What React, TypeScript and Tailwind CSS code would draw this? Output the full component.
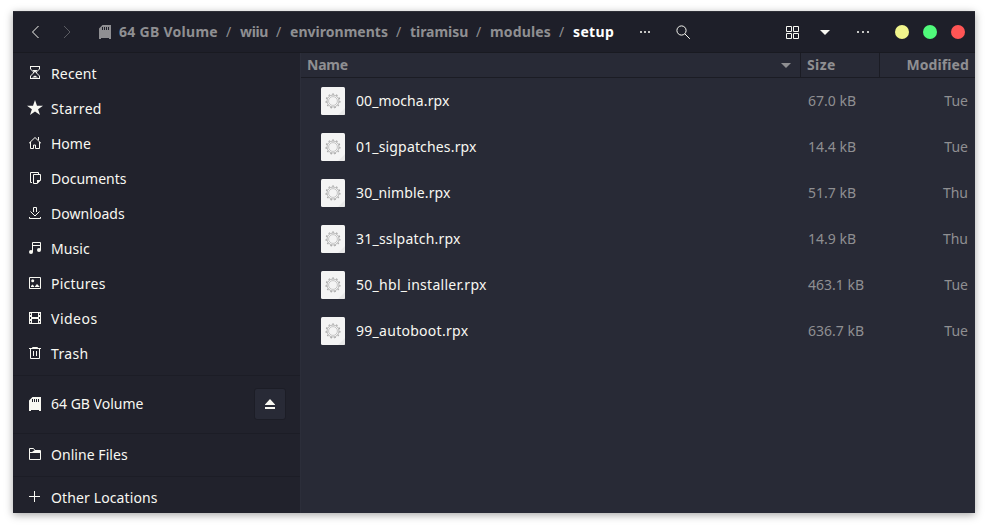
import type { ReactNode } from "react";

function Pix({ d, children, className = "" }: { d?: string; children?: ReactNode; className?: string }) {
  return (
    <svg width="16" height="16" viewBox="0 0 16 16" fill="none" stroke="currentColor" className={"shrink-0 " + className}>
      {d && <path d={d} />}
      {children}
    </svg>
  );
}

const SdCard = ({ className = "" }: { className?: string }) => (
  <Pix className={className}>
    <path
      d="M5.500 1H14v14h-2v-1H4v1H2V4.500zM5 3v3h1V3zM7 3v3h1V3zM9 3v3h1V3zM11 3v3h1V3z"
      fill="currentColor"
      fillRule="evenodd"
      stroke="none"
    />
  </Pix>
);

const icons: Record<string, ReactNode> = {
  recent: (
    <Pix className="mb-px" d="M3 1.500h10M3 13.500h10M3.500 1v3l3 3v1l-3 3v3M12.500 1v3l-3 3v1l3 3v3">
      <path d="M5.500 5h5L8.500 7.500h-1zM5 12.500l3-2 3 2z" fill="currentColor" stroke="none" />
    </Pix>
  ),
  starred: (
    <Pix className="mb-px">
      <path d="M8 0l2 5.700h6l-4.900 3.500 1.900 5.800L8 11.500 3 15l1.900-5.800L0 5.700h6z" fill="currentColor" stroke="none" />
    </Pix>
  ),
  home: <Pix className="mb-px" d="M2 8.300L8 2.500l6 5.800M3.500 7v6.500h3V10h2v3.500h4V7M11.500 2v3" />,
  documents: (
    <Pix className="mb-px" d="M5 12.500H3.500v-10h8V4M6.500 4.500h7V10l-3.500 3.500H6.500z">
      <path d="M10 10h4l-4 4z" fill="currentColor" stroke="none" />
    </Pix>
  ),
  downloads: <Pix className="mb-px" d="M2.500 12v1.500h11V12M6.500 7V2.500h3V7M3.500 6.500L8 11l4.500-4.500" />,
  music: (
    <Pix className="mb-px" d="M5.500 12V2.500h8V10M5 5.500h8">
      <circle cx="4" cy="12" r="2" fill="currentColor" stroke="none" />
      <circle cx="12" cy="10" r="2" fill="currentColor" stroke="none" />
    </Pix>
  ),
  pictures: (
    <Pix className="mb-px" d="M2.500 2.500h11v11h-11z">
      <path d="M4 12v-1l1.500-1.500L7 11v1zM7.500 12l2.500-3 2.500 2.500v.5z" fill="currentColor" stroke="none" />
      <circle cx="5.700" cy="5.700" r="1.500" fill="currentColor" stroke="none" />
    </Pix>
  ),
  videos: (
    <Pix className="mb-px">
      <path
        d="M2 2h12v12H2zM3 3.500v1.500h1V3.500zM3 7v2h1V7zM3 11v1.500h1V11zM12 3.500v1.500h1V3.500zM12 7v2h1V7zM12 11v1.500h1V11zM5 3v4h6V3zM5 9v4h6V9z"
        fill="currentColor"
        fillRule="evenodd"
        stroke="none"
      />
    </Pix>
  ),
  trash: <Pix className="mb-px" d="M2 3.500h12M5.500 3V2.500h5V3M3.500 4v9.500h9V4M6.500 6v5M9.500 6v5" />,
  online: (
    <Pix className="mb-[2px]" d="M2.500 13.500v-11h4l1.500 2h5.500v9zM3 6.500h10">
      <path d="M5 6l3-2h5v2z" fill="currentColor" stroke="none" />
    </Pix>
  ),
  plus: <Pix className="mb-[2px]" d="M2 7.500h11M7.500 2v11" />,
};

const places = [
  { icon: "recent", label: "Recent", track: "tracking-[0.15px]" },
  { icon: "starred", label: "Starred", track: "tracking-[0.35px]" },
  { icon: "home", label: "Home", track: "" },
  { icon: "documents", label: "Documents", track: "" },
  { icon: "downloads", label: "Downloads", track: "tracking-[0.05px]" },
  { icon: "music", label: "Music", track: "tracking-[0.1px]" },
  { icon: "pictures", label: "Pictures", track: "tracking-[0.25px]" },
  { icon: "videos", label: "Videos", track: "tracking-[0.5px]" },
  { icon: "trash", label: "Trash", track: "tracking-[0.35px]" },
];

const crumbs = [
  { label: "64 GB Volume", slot: "w-[107px]", track: "tracking-[0.28px]" },
  { label: "wiiu", slot: "w-[36px]", track: "tracking-[-0.35px]" },
  { label: "environments", slot: "w-[106px]", track: "tracking-[0.03px]" },
  { label: "tiramisu", slot: "w-[66px]", track: "tracking-[-0.05px]" },
  { label: "modules", slot: "w-[69px]", track: "tracking-[0.15px]" },
];

const files = [
  { name: "00_mocha.rpx", size: "67.0 kB", day: "Tue", track: "tracking-[0.1px]" },
  { name: "01_sigpatches.rpx", size: "14.4 kB", day: "Tue", track: "tracking-[0.16px]" },
  { name: "30_nimble.rpx", size: "51.7 kB", day: "Thu", track: "tracking-[0.12px]" },
  { name: "31_sslpatch.rpx", size: "14.9 kB", day: "Thu", track: "tracking-[0.22px]" },
  { name: "50_hbl_installer.rpx", size: "463.1 kB", day: "Tue", track: "tracking-[0.28px]" },
  { name: "99_autoboot.rpx", size: "636.7 kB", day: "Tue", track: "tracking-[0.28px]" },
];

function FileIcon() {
  return (
    <svg width="24" height="28" viewBox="0 0 24 28" className="shrink-0">
      <rect width="24" height="28" rx="1.500" fill="#f4f4f4" />
      <path d="M24 21v5.500a1.500 1.500 0 0 1-1.500 1.500H17z" fill="#e8e8e8" />
      <g fill="none" stroke="#a8a8a8">
        <circle cx="12" cy="14" r="4.400" strokeWidth="0.600" />
        <circle cx="12" cy="14" r="6" strokeWidth="0.800" />
        <circle cx="12" cy="14" r="6.900" strokeWidth="1.200" strokeDasharray="1.700 2.241" />
      </g>
    </svg>
  );
}

export default function App() {
  return (
    <div className="h-[528px] w-[988px] overflow-hidden bg-white pt-[11px] pl-[13px] font-['Noto_Sans','Open_Sans',sans-serif] text-[14px] text-[#f8f8f2]">
      <div className="flex h-[502px] w-[962px] flex-col overflow-hidden bg-[#282a36] shadow-[0_2px_8px_rgba(0,0,0,0.35)]">
        <header className="flex h-[42px] shrink-0 items-center border-t border-b border-t-[#2e2f37] border-b-[#191a21] bg-[#1e1f29] font-bold text-[#8f8f92]">
          <Pix className="ml-[14px] text-[#f8f8f2]" d="M11.500 2L5.500 8l6 6" />
          <Pix className="ml-[16px] text-[#5b5c62]" d="M5 2l6 6-6 6" />
          <SdCard className="ml-[22px]" />
          <nav className="mb-[2px] ml-[6px] flex items-center whitespace-nowrap">
            {crumbs.map((c) => (
              <span key={c.label} className="flex">
                <span className={c.slot + " " + c.track}>{c.label}</span>
                <span className="w-[14px] font-normal">/</span>
              </span>
            ))}
            <span className="w-[64px] tracking-[0.35px] text-white">setup</span>
          </nav>
          <span className="flex flex-1 items-center text-[#f8f8f2]">
            <svg width="16" height="16" viewBox="0 0 16 16" fill="#c6c6c4">
              <path d="M3 7h2v2H3zM7 7h2v2H7zM11 7h2v2h-2z" />
            </svg>
            <Pix className="ml-[22px]" d="M9.800 9.800l5 5">
              <circle cx="6.500" cy="6.500" r="4.600" />
            </Pix>
            <Pix className="ml-[94px]" d="M1.500 2.500h5v5h-5zM8.500 2.500h5v5h-5zM1.500 9.500h5v5h-5zM8.500 9.500h5v5h-5z" />
            <svg width="10" height="5" viewBox="0 0 10 5" fill="currentColor" className="ml-[19px]">
              <path d="M0 0h10L5 5z" />
            </svg>
            <svg width="16" height="16" viewBox="0 0 16 16" fill="#c6c6c4" className="ml-[25px]">
              <path d="M2 7h2v2H2zM7 7h2v2H7zM12 7h2v2h-2z" />
            </svg>
            <span className="ml-[24px] size-[14px] rounded-full bg-[#f1f58c]" />
            <span className="ml-[14px] size-[14px] rounded-full bg-[#50fa7b]" />
            <span className="ml-[14px] size-[14px] rounded-full bg-[#ff5555]" />
          </span>
        </header>

        <div className="flex min-h-0 flex-1">
          <aside className="flex w-[288px] shrink-0 flex-col border-r border-[#2c2e3a] bg-[#21222c] pt-[3px] whitespace-nowrap">
            {places.map((p) => (
              <div key={p.label} className="flex h-[35px] shrink-0 items-center gap-2 pl-[14px]">
                {icons[p.icon]}
                <span className={p.track}>{p.label}</span>
              </div>
            ))}
            <div className="mt-[4px] flex h-[58px] shrink-0 items-center gap-2 border-t border-[#1c1d26] pl-[14px]">
              <SdCard className="mb-px" />
              <span className="mb-[2px]">64 GB Volume</span>
              <span className="mr-[14px] mb-[2px] ml-auto flex size-[32px] items-center justify-center rounded-[3px] border border-[#1c1d26] bg-[#282a36]">
                <svg width="10" height="10" viewBox="0 0 10 10" fill="currentColor">
                  <path d="M5 0l5 5.500v.5H0v-.5zM0 8h10v2H0z" />
                </svg>
              </span>
            </div>
            <div className="flex h-[43px] shrink-0 items-center gap-2 border-t border-[#1c1d26] pl-[14px]">
              {icons.online}
              <span className="mb-[2px] tracking-[0.05px]">Online Files</span>
            </div>
            <div className="flex h-[43px] shrink-0 items-center gap-2 border-t border-[#1c1d26] pl-[14px]">
              {icons.plus}
              <span className="mb-[2px] tracking-[0.12px]">Other Locations</span>
            </div>
          </aside>

          <main className="flex min-w-0 flex-1 flex-col">
            <div className="flex h-[25px] shrink-0 items-stretch border-b border-[#1b1c24] leading-[24px] font-bold text-[#8f8f92]">
              <div className="flex w-[500px] items-center justify-between border-r border-[#1b1c24] pr-[9px] pl-[6px]">
                <span className="-tracking-[0.2px]">Name</span>
                <svg width="10" height="5" viewBox="0 0 10 5" fill="currentColor">
                  <path d="M0 0h10L5 5z" />
                </svg>
              </div>
              <div className="w-[79px] border-r border-[#1b1c24] pl-[6px] tracking-[0.4px]">Size</div>
              <div className="flex-1 pr-[6px] text-right tracking-[0.1px]">Modified</div>
            </div>
            {files.map((f) => (
              <div key={f.name} className="flex h-[46px] shrink-0 items-center pr-[7px] pl-[20px] text-[#8f8f92]">
                <FileIcon />
                <div className="mb-[2px] ml-[11px] flex flex-1">
                  <span className="w-[452px] text-[#f8f8f2]">
                    <span className={f.track}>{f.name}</span>
                  </span>
                  <span>{f.size}</span>
                  <span className="ml-auto">{f.day}</span>
                </div>
              </div>
            ))}
          </main>
        </div>
      </div>
    </div>
  );
}
